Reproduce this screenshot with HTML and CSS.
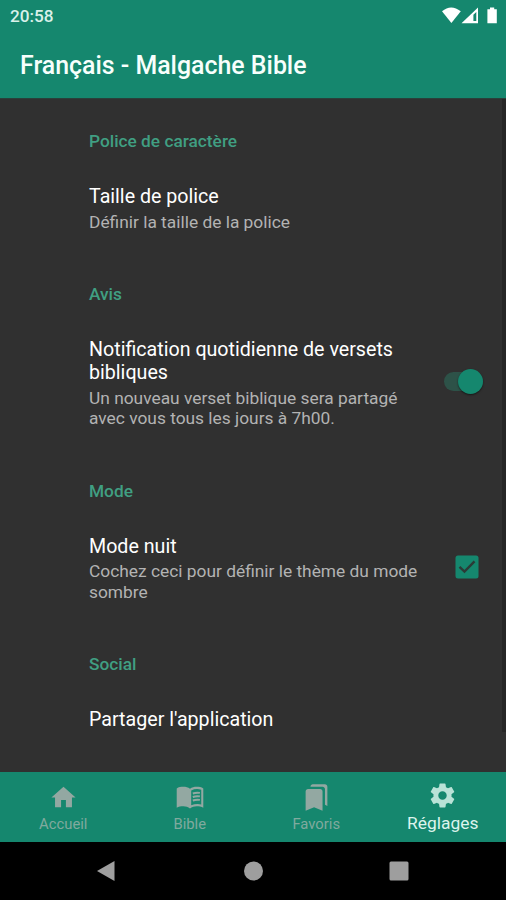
FILE: index.html
```html
<!DOCTYPE html>
<html lang="fr">
<head>
<meta charset="utf-8">
<title>Français - Malgache Bible</title>
<link rel="stylesheet" href="styles.css">
</head>
<body>
<div class="phone">
  <header class="appbar">
    <div class="status">
      <span class="clock">20:58</span>
      <svg class="status-icons" width="56" height="18" viewBox="0 0 56 18">
        <path d="M0 4.2Q9-3.4 18.8 4.2L9.4 16Z"/>
        <path fill-rule="evenodd" d="M19.5 16.2L36 .4V16.2ZM31.4 7.7V14H34.3V4.9Z"/>
        <path d="M45.4 2.2H48V.4H52.2V2.2H54.8V16.2H45.4Z"/>
      </svg>
    </div>
    <h1>Français - Malgache Bible</h1>
  </header>
  <main class="settings">
    <section>
      <h2>Police de caractère</h2>
      <div class="row"><div class="text">
        <h3>Taille de police</h3>
        <p>Définir la taille de la police</p>
      </div></div>
    </section>
    <section>
      <h2>Avis</h2>
      <div class="row"><div class="text">
        <h3>Notification quotidienne de versets<br>bibliques</h3>
        <p>Un nouveau verset biblique sera partagé<br>avec vous tous les jours à 7h00.</p>
      </div><div class="toggle"><span class="knob"></span></div></div>
    </section>
    <section>
      <h2>Mode</h2>
      <div class="row"><div class="text">
        <h3>Mode nuit</h3>
        <p>Cochez ceci pour définir le thème du mode<br>sombre</p>
      </div>
      <svg class="check" width="24" height="24" viewBox="0 0 24 24"><rect x=".5" y=".5" width="23" height="23" rx="2.5" fill="#15876e"/><path d="M4.5 11.8L9.5 16.6L19.5 6.4" fill="none" stroke="#2b3b37" stroke-width="2.4"/></svg>
      </div>
    </section>
    <section>
      <h2>Social</h2>
      <div class="row"><div class="text"><h3>Partager l'application</h3></div></div>
    </section>
    <div class="scrollbar"></div>
  </main>
  <nav class="tabs">
    <div class="tab">
      <svg width="29" height="29" viewBox="0 0 24 24"><path d="M10 20v-6h4v6h5v-8h3L12 3 2 12h3v8z"/></svg>
      <span>Accueil</span>
    </div>
    <div class="tab">
      <svg width="30" height="29" viewBox="0 0 24 24"><path fill-rule="evenodd" d="M1 4.6C2.5 3.5 4.5 3.2 6.5 3.2S10.5 3.7 12 4.8C13.5 3.7 15.5 3.2 17.5 3.2S21.5 3.5 23 4.6V20.4C21.5 19.7 19.5 19.3 17.5 19.3S13.5 19.9 12 21C10.5 19.9 8.500 19.3 6.5 19.3S2.5 19.7 1 20.4ZM21.3 5.6Q17 4.2 13 6.2V18.5Q17 16.8 21.3 17.7Z"/><path d="M14.3 8.7Q17 7.7 20.2 8.2M14.3 11.6Q17 10.6 20.2 11.1M14.3 14.5Q17 13.5 20.2 14" fill="none" stroke="#93a8a2" stroke-width="1.6"/></svg>
      <span>Bible</span>
    </div>
    <div class="tab">
      <svg width="29" height="29" viewBox="0 0 24 24"><path d="M19 18l2 1V3c0-1.1-.9-2-2-2H8.99C7.89 1 7 1.9 7 3h10c1.1 0 2 .9 2 2v13zM15 5H5c-1.1 0-2 .9-2 2v16l7-3 7 3V7c0-1.1-.9-2-2-2z"/></svg>
      <span>Favoris</span>
    </div>
    <div class="tab active">
      <svg width="29" height="29" viewBox="0 0 24 24"><path d="M19.43 12.98c.04-.32.07-.64.07-.98s-.03-.66-.07-.98l2.11-1.65c.19-.15.24-.42.12-.64l-2-3.46c-.12-.22-.39-.3-.61-.22l-2.49 1c-.52-.4-1.08-.73-1.69-.98l-.38-2.65C14.46 2.18 14.25 2 14 2h-4c-.25 0-.46.18-.49.42l-.38 2.65c-.61.25-1.17.59-1.69.98l-2.49-1c-.23-.09-.49 0-.61.22l-2 3.46c-.13.22-.07.49.12.64l2.11 1.65c-.04.32-.07.65-.07.98s.03.66.07.98l-2.11 1.65c-.19.15-.24.42-.12.64l2 3.46c.12.22.39.3.61.22l2.49-1c.52.4 1.08.73 1.69.98l.38 2.65c.03.24.24.42.49.42h4c.25 0 .46-.18.49-.42l.38-2.65c.61-.25 1.17-.59 1.69-.98l2.49 1c.23.09.49 0 .61-.22l2-3.46c.12-.22.07-.49-.12-.64l-2.11-1.65zM12 15.5c-1.93 0-3.5-1.57-3.5-3.5s1.57-3.5 3.5-3.5 3.5 1.57 3.5 3.5-1.57 3.5-3.5 3.5z"/></svg>
      <span>Réglages</span>
    </div>
  </nav>
  <footer class="system">
    <svg width="20" height="22" viewBox="0 0 20 22"><path d="M1 11L18.5 1V21Z"/></svg>
    <svg width="20" height="20" viewBox="0 0 20 20"><circle cx="10.5" cy="10" r="9.5"/></svg>
    <svg width="20" height="20" viewBox="0 0 20 20"><rect x=".5" y=".5" width="19" height="19" rx="1.5"/></svg>
  </footer>
</div>
</body>
</html>
```
FILE: styles.css
```css
* { box-sizing: border-box; }
body { margin: 0; background: #303030; font-family: Roboto, sans-serif; }
h1, h2, h3, p { margin: 0; }
svg { display: block; flex: none; }
.phone { width: 506px; height: 900px; display: flex; flex-direction: column; overflow: hidden; }
.appbar { height: 98px; flex: none; background: #15876e; color: #f7fffc; }
.status { height: 32px; padding: 0 8px 0 10px; display: flex; align-items: center; justify-content: space-between; }
.clock { font-size: 17.2px; font-weight: 500; line-height: 32px; color: #d9f1ea; }
.status-icons { fill: #fff; margin-top: -1px; }
h1 { padding-left: 20px; font-size: 24.9px; font-weight: 500; line-height: 68px; white-space: nowrap; }
.settings { position: relative; flex: 1; min-height: 0; padding: 32px 22px 0 89px; display: flex; flex-direction: column; gap: 52px; background: #303030; border-top: 1px solid #29403a; }
h2 { margin-bottom: 34px; font-size: 17.3px; font-weight: 500; line-height: 20px; color: #409f82; }
.row { display: flex; align-items: center; justify-content: space-between; }
.text { white-space: nowrap; }
h3 { font-size: 19.65px; font-weight: 400; line-height: 23px; color: #fff; }
p { margin-top: 3.5px; font-size: 17.35px; line-height: 20.5px; color: #b3b3b3; }
.toggle { width: 39px; height: 19px; margin: -3px 1px 0 0; border-radius: 10px; background: #2d5248; display: flex; align-items: center; justify-content: flex-end; }
.knob { width: 25px; height: 25px; flex: none; border-radius: 50%; background: #15876e; box-shadow: 0 1px 2px #0008; }
.check { margin: -2px 5px 0 0; }
.scrollbar { position: absolute; top: 0; right: 0; width: 4px; height: 633px; background: #262626; }
.tabs { height: 70px; flex: none; display: grid; grid-template-columns: repeat(4, 1fr); background: #15876e; }
.tab { display: flex; flex-direction: column; align-items: center; padding-top: 11px; color: #80aa9e; fill: #93a8a2; font-size: 14.8px; line-height: 18px; }
.tab span { margin-top: 3px; }
.active { padding-top: 9px; color: #dcf4ed; fill: #b9e2d7; font-size: 17.4px; line-height: 20px; }
.system { height: 58px; flex: none; background: #000; fill: #9e9e9e; display: flex; align-items: center; justify-content: space-between; padding: 0 97px 0 96px; }
```
